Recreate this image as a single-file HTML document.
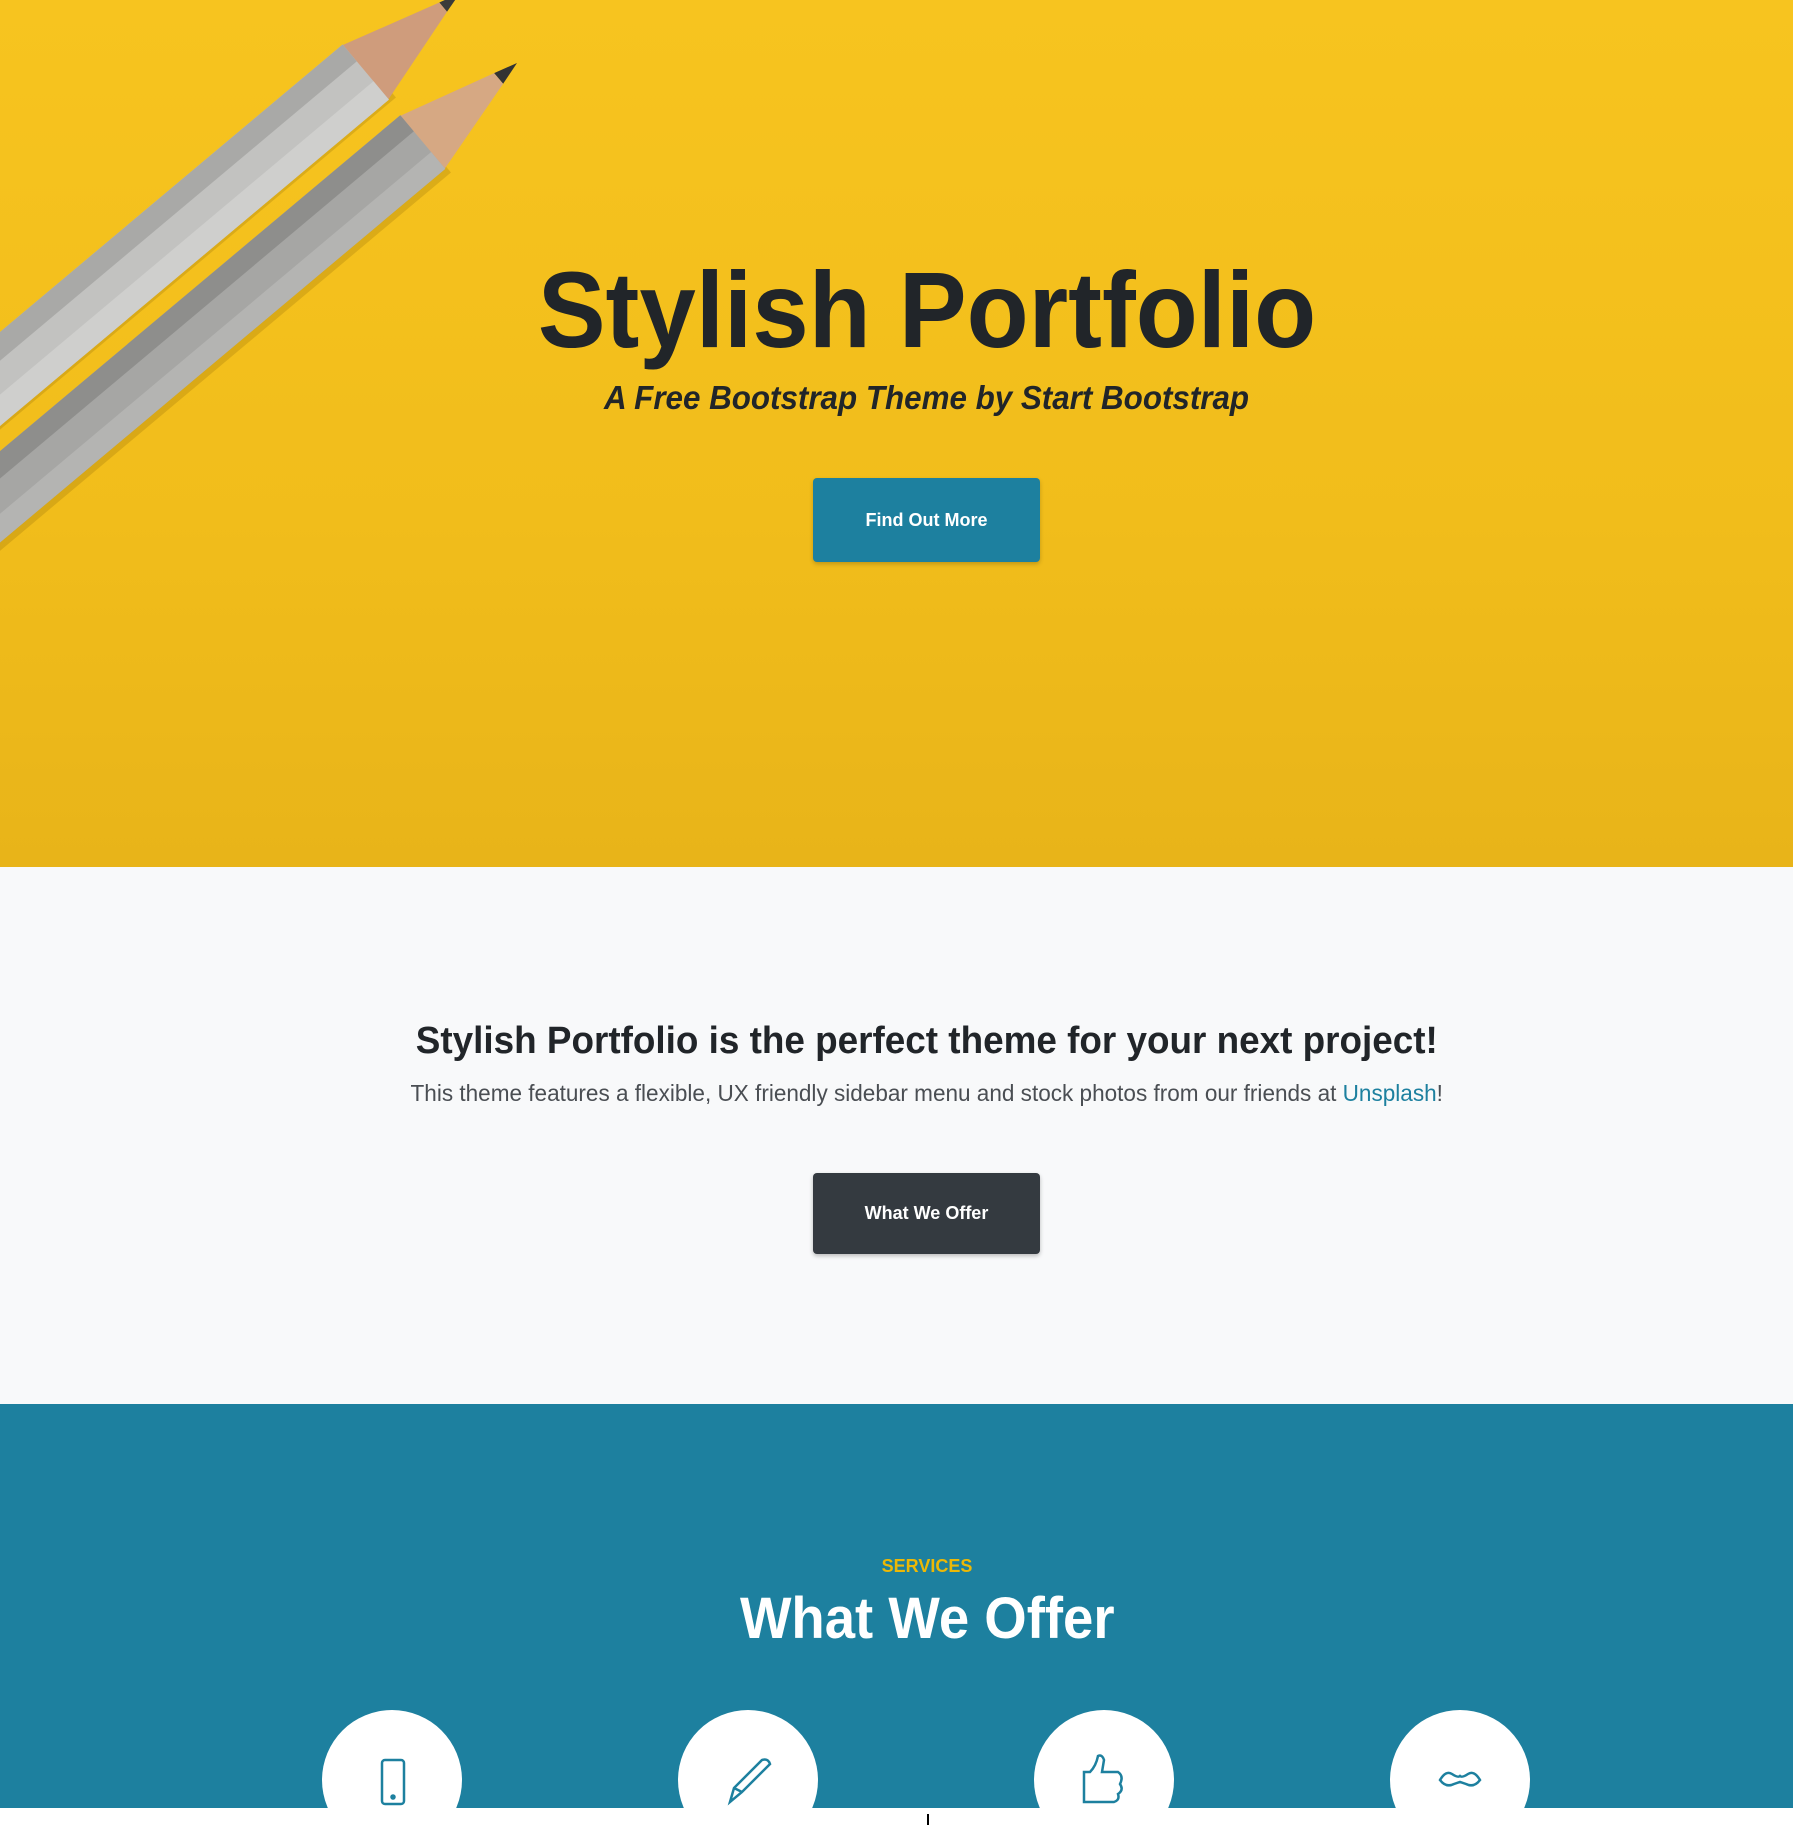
<!DOCTYPE html>
<html><head><meta charset="utf-8">
<style>
*{margin:0;padding:0;box-sizing:border-box}
body{width:1793px;height:1825px;overflow:hidden;background:#fff;font-family:"Liberation Sans",sans-serif;position:relative}
.abs{position:absolute}
.c{left:0;width:1854px;text-align:center;white-space:nowrap}
.sx{display:inline-block;transform-origin:center}
</style></head><body>
<div class="abs" style="left:0;top:0;width:1793px;height:867px;background:linear-gradient(180deg,#f7c41f 0%,#f1bd1b 60%,#e8b419 100%)"></div>
<svg class="abs" style="left:0;top:0" width="1793" height="867">
 <!-- shadows -->
 <g transform="translate(475,5) rotate(140)" opacity=".18"><rect x="120" y="-20" width="900" height="70" fill="#6a4a00"/></g>
 <g transform="translate(530,80) rotate(140)" opacity=".18"><rect x="120" y="-20" width="900" height="70" fill="#6a4a00"/></g>
 <!-- pencil 1 -->
 <g transform="translate(460,-7) rotate(140)">
  <polygon points="0,0 22,-6 22,6" fill="#3a3a3a"/>
  <polygon points="22,-6 125,-36 125,36 22,6" fill="#cf9c7c"/>
  <rect x="123" y="-36" width="900" height="72" fill="#c2c2c0"/>
  <rect x="123" y="-36" width="900" height="24" fill="#cfcfcd"/>
  <rect x="123" y="14" width="900" height="22" fill="#a9a9a7"/>
 </g>
 <!-- pencil 2 -->
 <g transform="translate(517,63) rotate(140)">
  <polygon points="0,0 24,-7 24,7" fill="#333"/>
  <polygon points="24,-7 125,-35 125,35 24,7" fill="#d6a883"/>
  <rect x="123" y="-35" width="900" height="70" fill="#a6a6a4"/>
  <rect x="123" y="-35" width="900" height="22" fill="#b4b4b2"/>
  <rect x="123" y="14" width="900" height="21" fill="#8e8e8c"/>
 </g>
</svg>
<div class="abs c" style="top:245px;font-size:108px;font-weight:bold;color:#212529;line-height:130px"><span class="sx" style="transform:scaleX(.94)">Stylish Portfolio</span></div>
<div class="abs c" style="top:377px;font-size:33px;font-weight:bold;font-style:italic;color:#212529;line-height:42px"><span class="sx" style="transform:scaleX(.95)">A Free Bootstrap Theme by Start Bootstrap</span></div>
<div class="abs" style="left:813px;top:478px;width:227px;height:84px;background:#1d809f;border-radius:4px;box-shadow:0 2px 4px rgba(0,0,0,.2);color:#fff;font-weight:bold;font-size:18px;line-height:84px;text-align:center">Find Out More</div>

<div class="abs" style="left:0;top:867px;width:1793px;height:537px;background:#f8f9fa"></div>
<div class="abs c" style="top:1017px;font-size:38px;font-weight:bold;color:#212529;line-height:48px"><span class="sx" style="transform:scaleX(.97)">Stylish Portfolio is the perfect theme for your next project!</span></div>
<div class="abs c" style="top:1078px;font-size:23px;color:#4a4e53;line-height:30px"><span class="sx" style="transform:scaleX(.98)">This theme features a flexible, UX friendly sidebar menu and stock photos from our friends at <span style="color:#1d809f">Unsplash</span>!</span></div>
<div class="abs" style="left:813px;top:1173px;width:227px;height:81px;background:#343a40;border-radius:4px;box-shadow:0 2px 4px rgba(0,0,0,.25);color:#fff;font-weight:bold;font-size:18px;line-height:81px;text-align:center">What We Offer</div>

<div class="abs" style="left:0;top:1404px;width:1793px;height:404px;background:#1d809f;overflow:hidden">
 <div class="abs c" style="top:151px;font-size:18px;font-weight:bold;color:#ecb807;line-height:22px">SERVICES</div>
 <div class="abs c" style="top:180px;font-size:58px;font-weight:bold;color:#fff;line-height:70px"><span class="sx" style="transform:scaleX(.94)">What We Offer</span></div>
 <div class="abs" style="left:322px;top:306px;width:140px;height:140px;border-radius:50%;background:#fff"></div>
 <div class="abs" style="left:678px;top:306px;width:140px;height:140px;border-radius:50%;background:#fff"></div>
 <div class="abs" style="left:1034px;top:306px;width:140px;height:140px;border-radius:50%;background:#fff"></div>
 <div class="abs" style="left:1390px;top:306px;width:140px;height:140px;border-radius:50%;background:#fff"></div>
 <svg class="abs" style="left:0;top:0" width="1793" height="404" fill="none" stroke="#1d809f" stroke-width="2.5">
  <rect x="382" y="356" width="22" height="44" rx="3"/><circle cx="393" cy="393" r="1.5" fill="#1d809f"/>
  <path d="M730 398 L734 384 L762 356 Q768 354 770 360 L742 388 Z M734 384 L742 388"/>
  <path d="M1084 368 L1090 368 Q1096 362 1098 352 Q1102 350 1104 356 L1102 368 L1118 368 Q1124 372 1120 380 Q1124 386 1118 390 Q1120 396 1114 398 L1090 398 L1084 398 Z"/>
  <path d="M1440 376 Q1446 366 1452 370 Q1458 374 1460 372 Q1462 374 1468 370 Q1474 366 1480 376 Q1474 384 1466 380 L1460 378 L1454 380 Q1446 384 1440 376 Z"/>
 </svg>
</div>
<div class="abs" style="left:927px;top:1814px;width:2px;height:11px;background:#000"></div>
</body></html>
